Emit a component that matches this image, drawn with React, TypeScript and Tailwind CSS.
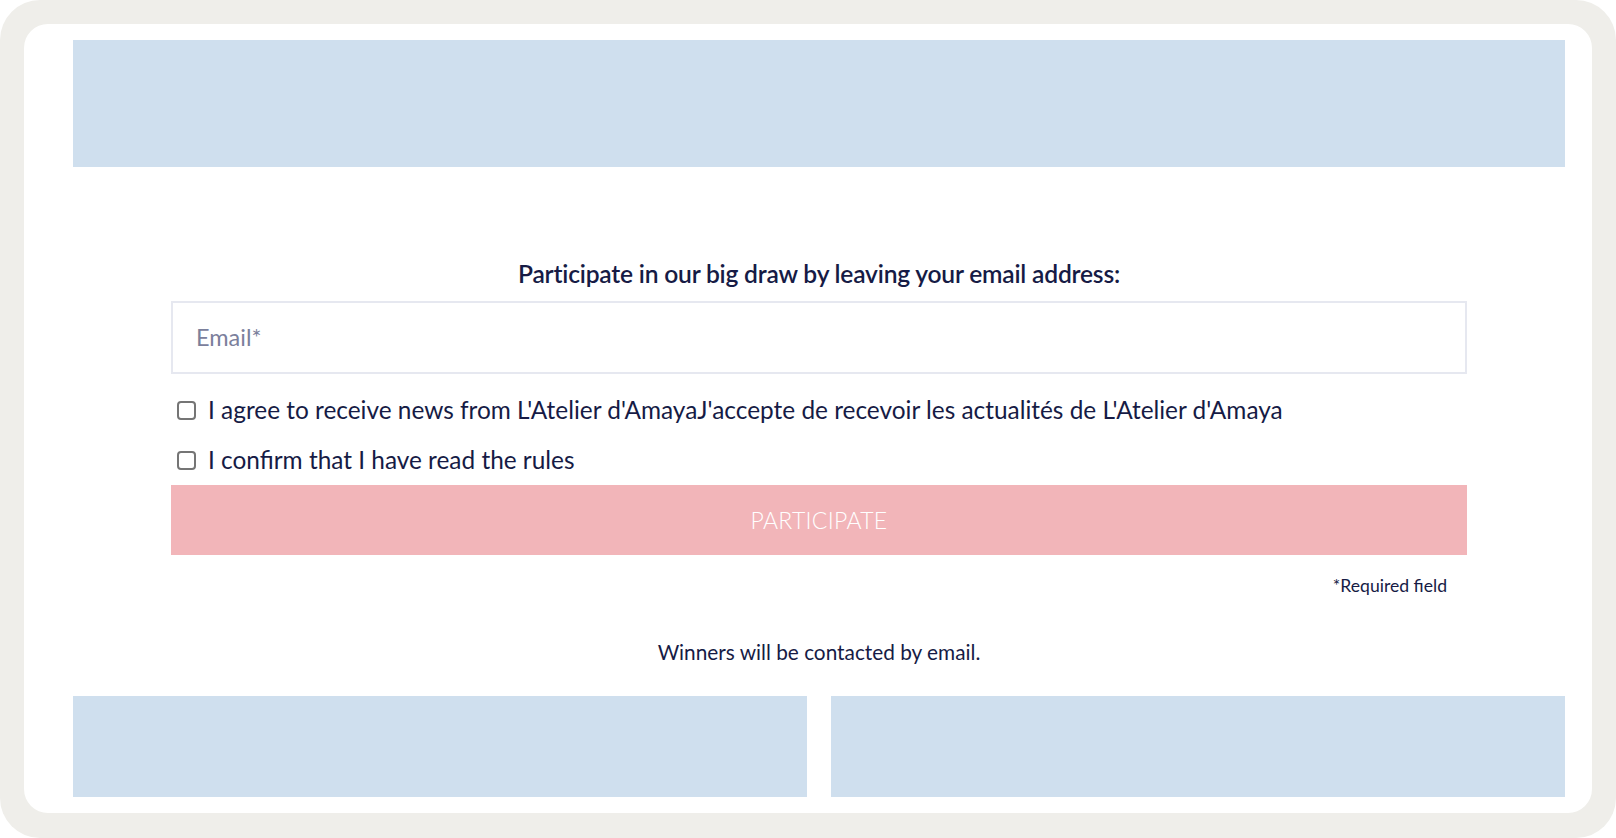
import React from 'react';

const navy = 'text-[#161b45]';

const Check = ({ label }: { label: string }) => (
  <label className="flex h-[30px] items-center">
    <span className="ml-[6px] mr-[12px] h-[19px] w-[19px] shrink-0 rounded-[4px] border-2 border-[#757575] bg-white" />
    <span className={`text-[24.4px] leading-[30px] ${navy}`}>{label}</span>
  </label>
);

export default function App() {
  return (
    <div className="h-[838px] w-[1616px] bg-white font-['Lato',sans-serif]">
      <div className="h-full rounded-[40px] bg-[#efeeea] px-6 pb-[25px] pt-6">
        <div className="flex h-full flex-col rounded-[24px] bg-white pl-[49px] pr-[27px] pt-4">
          <div className="h-[127px] bg-[#cfdfee]" />

          <div className="mx-[98px] mt-[91px] flex flex-col">
            <h2 className={`text-center text-[24.6px] font-semibold leading-[32px] tracking-[-0.2px] ${navy}`}>
              Participate in our big draw by leaving your email address:
            </h2>
            <div className="mt-[11px] flex h-[73px] items-center border-2 border-[#e6e8f0] pl-[23px]">
              <span className="text-[23.5px] text-[#7b809c]">Email*</span>
            </div>

            <div className="mt-[21px] flex flex-col gap-[20px]">
              <Check label="I agree to receive news from L'Atelier d'AmayaJ'accepte de recevoir les actualités de L'Atelier d'Amaya" />
              <Check label="I confirm that I have read the rules" />
            </div>

            <button className="mt-[10px] h-[70px] bg-[#f2b5b9] text-[23px] font-light tracking-[0.3px] text-white">
              PARTICIPATE
            </button>

            <p className={`mt-[19px] pr-[20px] text-right text-[17.6px] leading-[24px] ${navy}`}>*Required field</p>

            <p className={`mt-[41px] text-center text-[20.8px] leading-[26px] ${navy}`}>
              Winners will be contacted by email.
            </p>
          </div>

          <div className="mt-[31px] grid h-[101px] grid-cols-2 gap-6">
            <div className="bg-[#cfdfee]" />
            <div className="bg-[#cfdfee]" />
          </div>
        </div>
      </div>
    </div>
  );
}
